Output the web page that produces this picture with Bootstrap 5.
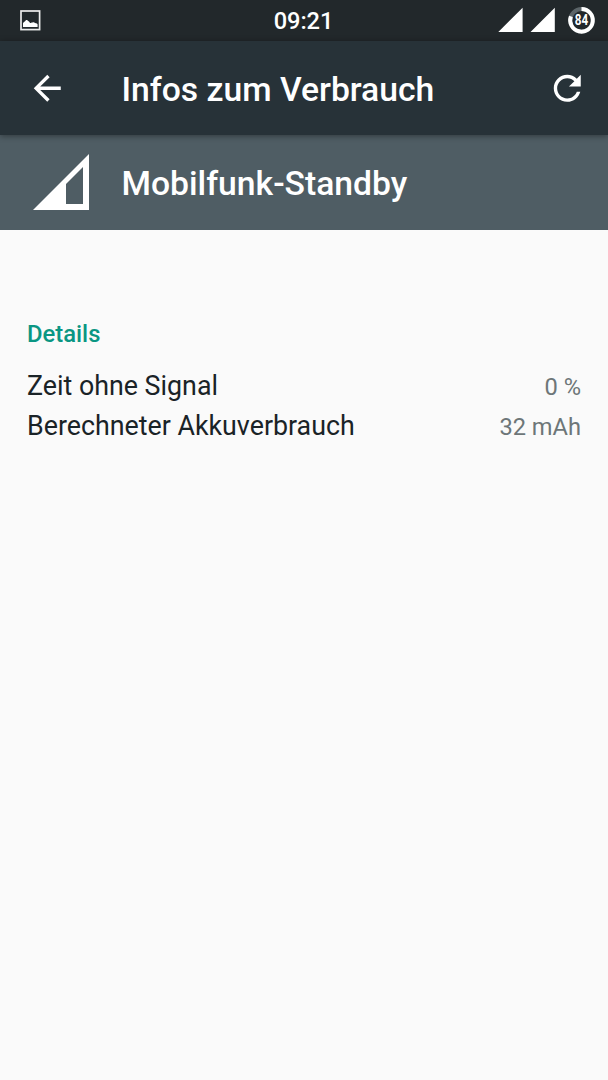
<!DOCTYPE html>
<html lang="de">
<head>
<meta charset="utf-8">
<meta name="viewport" content="width=device-width, initial-scale=1">
<title>Infos zum Verbrauch</title>
<link href="https://cdn.jsdelivr.net/npm/bootstrap@5.3.0/dist/css/bootstrap.min.css" rel="stylesheet">
<style>
body{font-family:Roboto,"Noto Sans",sans-serif;background:#fafafa;color:#1a2327;overflow:hidden}
svg{display:block;flex:none}
.status-bar{height:40.5px;background:#22282b;padding:0 12px;font-size:23.65px;font-weight:500;line-height:40px}
.status-side{flex:1 1 0;min-width:0}
.clock{padding:1px 1px 0 0;letter-spacing:-.1px}
.app-bar{height:94.5px;background:#273238;padding:0 21px 0 27px;gap:54px;box-shadow:0 1px 6px rgba(0,0,0,.4);z-index:1}
.entry-header{height:94.5px;background:#4f5d64;padding-left:33px;gap:32.5px}
.title-text{font-size:33.7px;font-weight:500;line-height:40px;margin:0;padding-top:3.5px;white-space:nowrap}
.details{padding:89.5px 27px 0}
.section-label{font-size:23.8px;font-weight:500;line-height:30px;color:#0a9683;margin:0 0 20.5px}
.detail-row{height:40px;font-size:26.8px;line-height:32px}
.detail-value{font-size:23.65px;color:#6d7678}
</style>
</head>
<body>
<div class="status-bar d-flex align-items-center text-white">
  <div class="status-side">
    <svg class="ms-2" width="21" height="21" viewBox="0 0 21 21"><rect x="1" y="1" width="18.6" height="18.6" fill="none" stroke="#ececec" stroke-width="1.7"/><path d="M3 17V13.300C3.500 12 4.500 11.500 5 11.500C5.500 10 7.500 9.500 8 11C9 11.200 9.500 12 10 13C11 13 11.500 12.500 12.500 12.500C13.500 11.800 14.500 12.200 15 13C16.500 13 17.600 13.800 17.600 14.500V17Z" fill="#fff"/></svg>
  </div>
  <div class="clock">09:21</div>
  <div class="status-side d-flex justify-content-end align-items-center">
    <svg width="98" height="40" viewBox="498 0 98 40">
      <path d="M498.3 32H522.6V7.8ZM530.5 32H554.8V7.8Z" fill="#fff"/>
      <circle cx="581.5" cy="20.3" r="11.3" fill="none" stroke="#5b6468" stroke-width="4"/>
      <path d="M581.5 9A11.3 11.3 0 1 1 570.9 16.4" fill="none" stroke="#fff" stroke-width="4"/>
      <text x="574.7" y="25.3" font-size="14" font-weight="700" fill="#fff" textLength="13.4" lengthAdjust="spacingAndGlyphs">84</text>
    </svg>
  </div>
</div>
<header class="app-bar d-flex align-items-center position-relative text-white">
  <svg width="40.5" height="40.5" viewBox="0 0 24 24" fill="#fff"><path d="M20 11H7.83l5.59-5.59L12 4l-8 8 8 8 1.410-1.410L7.830 13H20v-2z"/></svg>
  <h1 class="title-text">Infos zum Verbrauch</h1>
  <svg class="ms-auto" width="40.5" height="40.5" viewBox="0 0 24 24" fill="#fff"><path d="M17.65 6.350C16.200 4.900 14.210 4 12 4c-4.420 0-7.990 3.580-7.990 8s3.570 8 7.990 8c3.730 0 6.840-2.550 7.730-6h-2.080c-.82 2.330-3.040 4-5.650 4-3.310 0-6-2.690-6-6s2.690-6 6-6c1.660 0 3.140.69 4.220 1.780L13 11h7V4l-2.350 2.350z"/></svg>
</header>
<section class="entry-header d-flex align-items-center text-white">
  <svg width="56" height="56" viewBox="0 0 56 56"><path d="M0 56H56V0ZM33 50V30L50 13V50Z" fill="#fff" fill-rule="evenodd"/></svg>
  <h2 class="title-text">Mobilfunk-Standby</h2>
</section>
<main class="details">
  <h3 class="section-label">Details</h3>
  <div class="detail-row d-flex justify-content-between align-items-baseline"><span>Zeit ohne Signal</span><span class="detail-value">0 %</span></div>
  <div class="detail-row d-flex justify-content-between align-items-baseline"><span>Berechneter Akkuverbrauch</span><span class="detail-value">32 mAh</span></div>
</main>
<script src="https://cdn.jsdelivr.net/npm/bootstrap@5.3.0/dist/js/bootstrap.bundle.min.js"></script>
</body>
</html>
